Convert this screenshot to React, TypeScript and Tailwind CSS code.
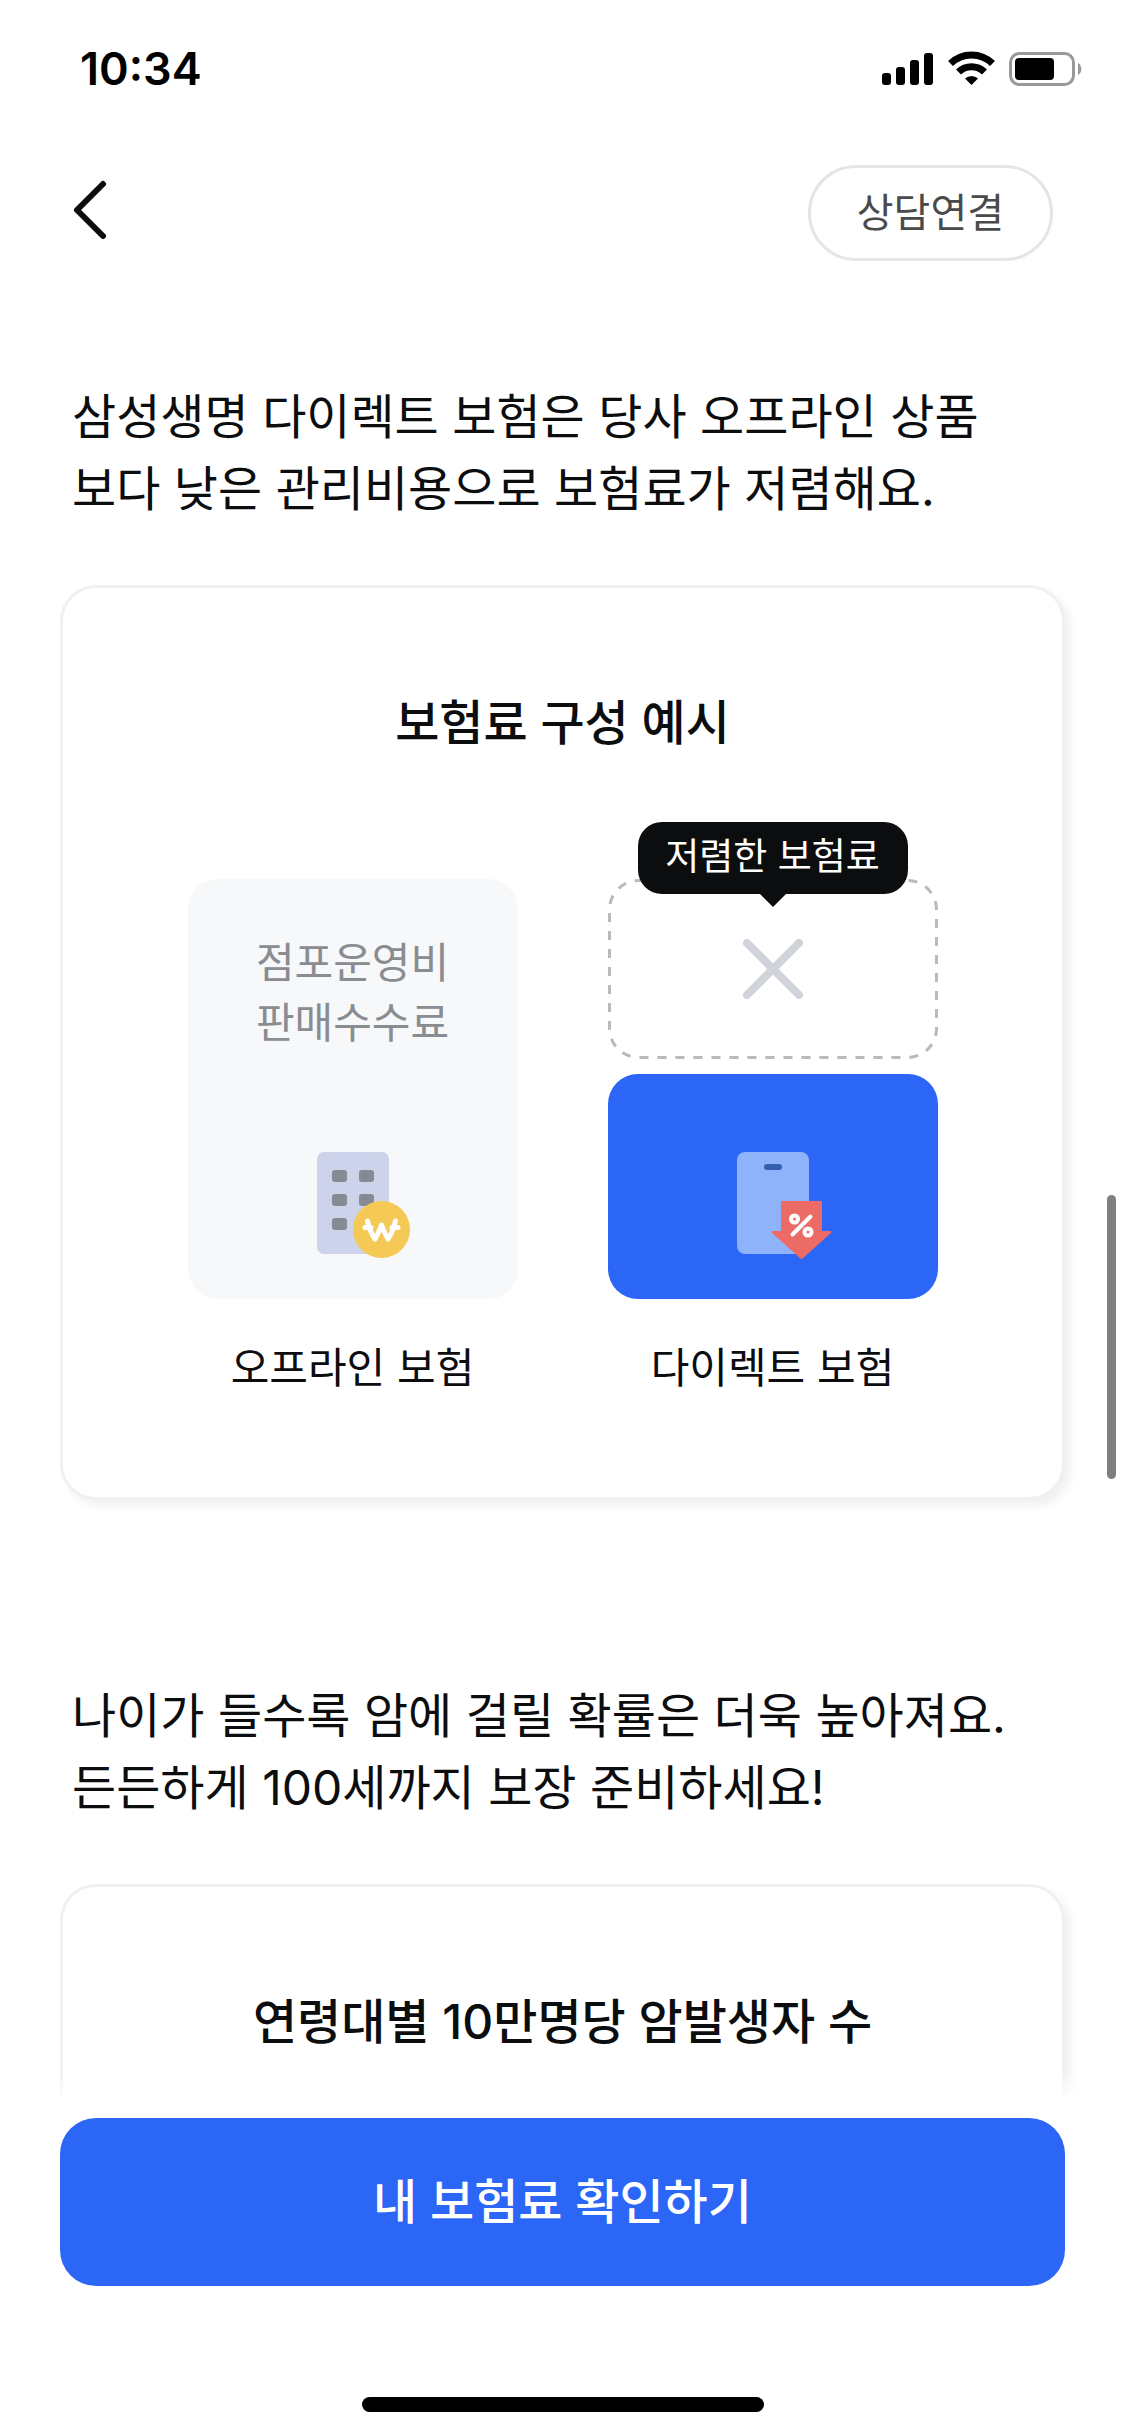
import React from "react";

const App = () => {
  return (
    <div className="relative flex h-screen flex-col overflow-hidden bg-white font-[Inter,'Noto_Sans_CJK_KR',sans-serif] text-[#0c0d0f]">
      <StatusBar />
      <header className="flex items-center justify-between pt-[33px] pr-[72px] pl-[66px]">
        <button type="button" aria-label="뒤로" className="p-1">
          <svg width="48" height="72" viewBox="0 0 48 72" fill="none">
            <path
              d="M33 7 L7 33 L33 59"
              stroke="currentColor"
              strokeWidth="6"
              strokeLinecap="round"
              strokeLinejoin="round"
            />
          </svg>
        </button>
        <button
          type="button"
          className="h-24 rounded-full border-3 border-[#e5e5e5] px-[46px] text-[40px] leading-[60px] text-[#4a4a4a]"
        >
          상담연결
        </button>
      </header>

      <main className="relative min-h-0 flex-1 overflow-hidden px-[60px] pt-[120px]">
        <section>
          <Lead>
            삼성생명 다이렉트 보험은 당사 오프라인 상품
            <br />
            보다 낮은 관리비용으로 보험료가 저렴해요.
          </Lead>
          <Card title="보험료 구성 예시">
            <div className="mt-[120px] flex justify-center gap-[90px]">
              <figure className="w-[330px]">
                <div className="flex h-[420px] flex-col items-center justify-between rounded-[30px] bg-[#f6f8fa] pt-[54px] pb-[39px]">
                  <p className="text-[42px] leading-[60px] text-[#898c91]">
                    점포운영비
                    <br />
                    판매수수료
                  </p>
                  <BuildingIcon />
                </div>
                <Caption>오프라인 보험</Caption>
              </figure>
              <figure className="w-[330px]">
                <div className="flex h-[420px] flex-col gap-[15px]">
                  <div className="relative flex h-[180px] items-center justify-center">
                    <DashedFrame />
                    <svg width="60" height="60" viewBox="0 0 60 60">
                      <path
                        d="M4 4 L56 56 M56 4 L4 56"
                        stroke="#d0d3da"
                        strokeWidth="8"
                        strokeLinecap="round"
                      />
                    </svg>
                    <Tooltip>저렴한 보험료</Tooltip>
                  </div>
                  <div className="flex flex-1 items-end justify-center rounded-[30px] bg-[#2c66f7] pb-[39px]">
                    <PhoneIcon />
                  </div>
                </div>
                <Caption>다이렉트 보험</Caption>
              </figure>
            </div>
          </Card>
        </section>

        <section className="mt-[180px]">
          <Lead>
            나이가 들수록 암에 걸릴 확률은 더욱 높아져요.
            <br />
            든든하게 100세까지 보장 준비하세요!
          </Lead>
          <Card title="연령대별 10만명당 암발생자 수" />
        </section>

        <div className="absolute inset-x-0 bottom-0 h-9 bg-linear-to-t from-white from-20% to-transparent" />
      </main>

      <footer className="flex flex-col items-center px-[60px] pt-3 pb-6">
        <button
          type="button"
          className="h-[168px] w-full rounded-[36px] bg-[#2c66f7] text-5xl leading-[72px] font-medium text-white"
        >
          내 보험료 확인하기
        </button>
        <div className="mt-[111px] h-[15px] w-[402px] rounded-full bg-black" />
      </footer>

      {/* scroll indicator */}
      <div className="absolute top-[1195px] right-[9px] h-[284px] w-[9px] rounded-full bg-[#808080]" />
    </div>
  );
};

const StatusBar = () => (
  <div className="flex h-[132px] items-center justify-between pt-1.5 pr-[42px] pl-20">
    <span className="text-[45px] leading-[54px] font-semibold text-black">
      10:34
    </span>
    <svg width="202" height="36" viewBox="0 0 202 36">
      <rect x="1" y="22" width="9" height="12" rx="3" />
      <rect x="15" y="16" width="9" height="18" rx="3" />
      <rect x="29" y="9" width="9" height="25" rx="3" />
      <rect x="43" y="2" width="9" height="32" rx="3" />
      <g fill="none" stroke="#000" strokeWidth="7">
        <path d="M69.500 12.500 A30 30 0 0 1 111.500 12.500" />
        <path d="M77.500 21 A18.500 18.500 0 0 1 103.500 21" />
      </g>
      <path d="M90.500 34 L84 27.500 A9.500 9.500 0 0 1 97 27.500 Z" />
      <rect
        x="129.500"
        y="2.500"
        width="63"
        height="31"
        rx="9"
        fill="none"
        stroke="#999"
        strokeWidth="3"
      />
      <rect x="134" y="7" width="39" height="22" rx="4" />
      <path d="M197 12 A7 7 0 0 1 197 24 Z" fill="#999" />
    </svg>
  </div>
);

const Lead = ({ children }: { children: React.ReactNode }) => (
  <p className="px-3 text-5xl leading-[72px] whitespace-nowrap">{children}</p>
);

const Card = ({
  title,
  children,
}: {
  title: string;
  children?: React.ReactNode;
}) => (
  <div className="mt-[60px] min-h-[300px] rounded-[36px] border-3 border-[#f0f0f0] bg-white pt-[99px] pb-[99px] shadow-[6px_6px_9px_rgba(0,0,0,0.06)]">
    <h2 className="text-center text-5xl leading-[72px] font-medium">{title}</h2>
    {children}
  </div>
);

const Caption = ({ children }: { children: React.ReactNode }) => (
  <figcaption className="mt-[39px] text-center text-[42px] leading-[60px]">
    {children}
  </figcaption>
);

const Tooltip = ({ children }: { children: React.ReactNode }) => (
  <div className="absolute -top-[57px] left-1/2 flex -translate-x-1/2 flex-col items-center">
    <div className="flex h-[72px] w-[270px] items-center justify-center rounded-[24px] bg-[#0c0d0f] pb-0.5 text-[37px] leading-[48px] whitespace-nowrap text-white">
      {children}
    </div>
    <svg width="26" height="13" viewBox="0 0 26 13">
      <path d="M0 0 H26 L13 13 Z" fill="#0c0d0f" />
    </svg>
  </div>
);

const DashedFrame = () => (
  <svg className="absolute inset-0 h-full w-full" viewBox="0 0 330 180">
    <rect
      x="1.500"
      y="1.500"
      width="327"
      height="177"
      rx="29"
      fill="none"
      stroke="#b9babc"
      strokeWidth="3"
      strokeDasharray="9 9"
    />
  </svg>
);

const BuildingIcon = () => (
  <svg width="132" height="108" viewBox="0 0 132 108">
    <rect x="30" width="72" height="102" rx="7" fill="#ccd3ea" />
    <g fill="#868b93">
      <rect x="45" y="18" width="15" height="12" rx="3" />
      <rect x="72" y="18" width="15" height="12" rx="3" />
      <rect x="45" y="42" width="15" height="12" rx="3" />
      <rect x="72" y="42" width="15" height="12" rx="3" />
      <rect x="45" y="66" width="15" height="12" rx="3" />
    </g>
    <circle cx="94.500" cy="77.500" r="28.500" fill="#f5c955" />
    <path
      d="M80.500 69 Q83 80 88 87 Q92 80 94.500 73 Q97 80 101 87 Q106 80 108.500 69 M78 75.500 H84 M105 75.500 H111"
      fill="none"
      stroke="#fff"
      strokeWidth="5"
      strokeLinecap="round"
      strokeLinejoin="round"
    />
  </svg>
);

const PhoneIcon = () => (
  <svg width="132" height="108" viewBox="0 0 132 108">
    <rect x="30" width="72" height="102" rx="8" fill="#8fb3fa" />
    <rect x="57" y="12" width="18" height="6" rx="3" fill="#355db0" />
    <path
      d="M75 49 H114 Q115 49 115 50 V79 H124 Q125 80 124 81 L95.500 106.500 Q94.500 107.500 93.500 106.500 L65 81 Q64 80 65 79 H74 V50 Q74 49 75 49 Z"
      fill="#ed6b66"
    />
    <g fill="none" stroke="#fff" strokeWidth="4" strokeLinecap="round">
      <circle cx="87.500" cy="67" r="3.500" />
      <circle cx="101" cy="80" r="3.500" />
      <path d="M85.500 82.500 L103.500 64.500" />
    </g>
  </svg>
);

export default App;
